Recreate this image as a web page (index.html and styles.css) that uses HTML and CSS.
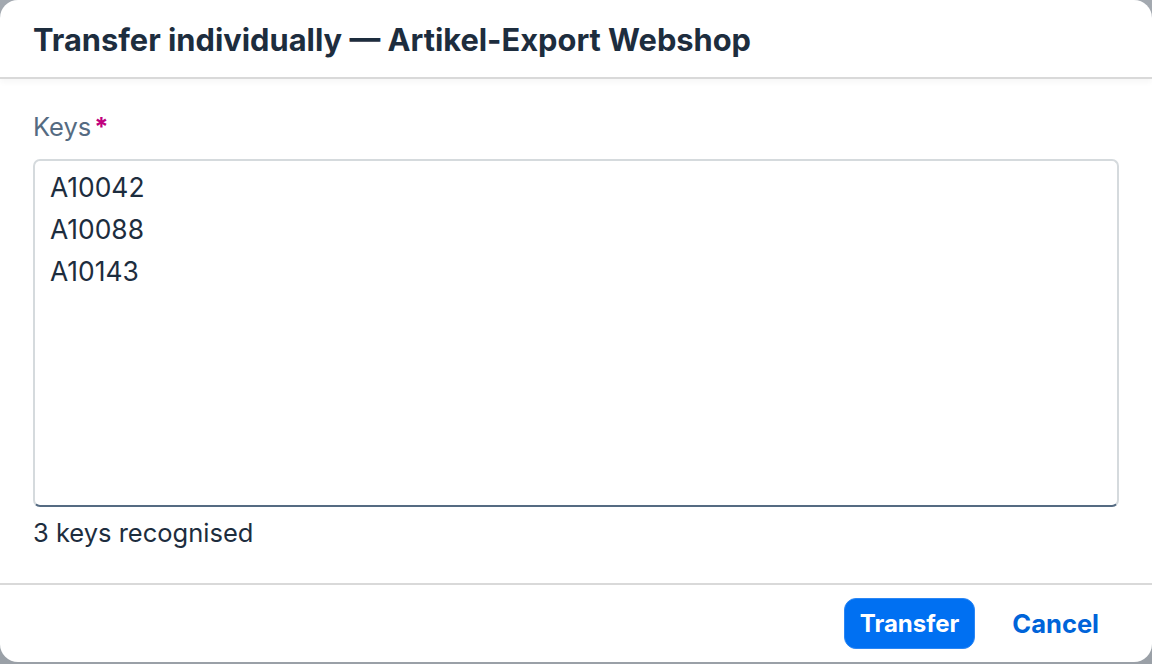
FILE: index.html
```html
<!DOCTYPE html>
<html lang="en">
<head>
<meta charset="utf-8">
<title>Transfer individually</title>
<link rel="stylesheet" href="styles.css">
</head>
<body>
<div class="dialog">
  <header class="dlg-header">
    <h1 class="dlg-title">Transfer individually — Artikel-Export Webshop</h1>
  </header>
  <main class="dlg-content">
    <label class="field-label" for="keys">Keys<span class="req">*</span></label>
    <textarea id="keys" class="keys-input">A10042
A10088
A10143</textarea>
    <div class="hint">3 keys recognised</div>
  </main>
  <footer class="dlg-footer">
    <button class="btn btn-emph">Transfer</button>
    <button class="btn btn-trans">Cancel</button>
  </footer>
</div>
</body>
</html>
```

FILE: styles.css
```css
html, body {
  margin: 0;
  padding: 0;
  height: 100%;
}
body {
  background: linear-gradient(180deg, #a3a9b0 0%, #9aa0a7 100%);
  font-family: Inter, "Noto Sans", "Liberation Sans", sans-serif;
  color: #1d2d3e;
  overflow: hidden;
}
.dialog {
  width: 1152px;
  height: 662px;
  background: #fff;
  border-radius: 18px;
  display: flex;
  flex-direction: column;
  overflow: hidden;
}
.dlg-header {
  box-sizing: border-box;
  height: 79px;
  border-bottom: 2px solid #d9d9d9;
  box-shadow: 0 3px 6px rgba(0,0,0,0.04);
  display: flex;
  align-items: center;
  padding: 2px 33px 0;
  flex: none;
  position: relative;
  z-index: 1;
}
.dlg-title {
  margin: 0;
  font-size: 30.8px;
  font-weight: 700;
  color: #1d2d3e;
  white-space: nowrap;
}
.dlg-content {
  flex: 1;
  padding: 32px 33px 0;
  display: flex;
  flex-direction: column;
}
.field-label {
  font-size: 25.5px;
  color: #556b82;
  line-height: 32px;
  display: flex;
  align-items: baseline;
}
.req {
  color: #c0007e;
  font-weight: 700;
  margin-left: 3px;
}
.keys-input {
  margin-top: 16px;
  height: 348px;
  box-sizing: border-box;
  border: 2px solid #d5dadd;
  border-bottom: 2px solid #556b82;
  border-radius: 7px;
  padding: 5px 15px;
  font-family: Inter, "Noto Sans", "Liberation Sans", sans-serif;
  font-size: 26.4px;
  line-height: 42px;
  color: #1d2d3e;
  resize: none;
  outline: none;
  background: #fff;
}
.hint {
  margin-top: 10px;
  font-size: 25.5px;
  line-height: 32px;
  color: #1d2d3e;
}
.dlg-footer {
  height: 79px;
  box-sizing: border-box;
  border-top: 2px solid #d9d9d9;
  flex: none;
  display: flex;
  align-items: center;
  justify-content: flex-end;
  padding: 0 37px 0 0;
  gap: 21px;
}
.btn {
  font-family: Inter, "Noto Sans", "Liberation Sans", sans-serif;
  font-size: 24px;
  font-weight: 700;
  height: 51px;
  border-radius: 12px;
  padding: 0 15px;
  cursor: pointer;
}
.btn-emph {
  background: #0070f2;
  color: #fff;
  border: 1px solid #2a86f5;
}
.btn-trans {
  font-size: 25.5px;
  background: transparent;
  color: #0064d9;
  border: 1px solid transparent;
}
```
